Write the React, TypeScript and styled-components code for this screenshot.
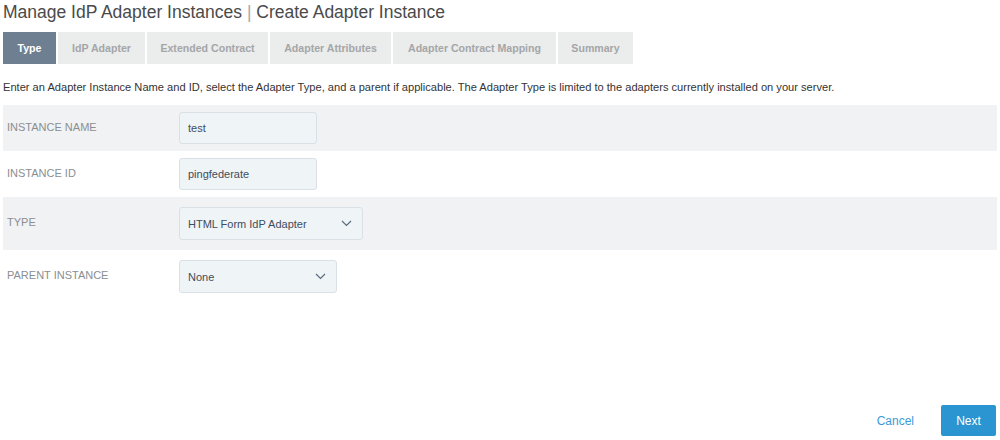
import React from 'react';
import styled, { createGlobalStyle } from 'styled-components';

const GlobalStyle = createGlobalStyle`
  html, body {
    margin: 0;
    padding: 0;
    background: #ffffff;
    font-family: "Liberation Sans", Arial, sans-serif;
  }
`;

const tabs = [
  { label: 'Type', width: 53 },
  { label: 'IdP Adapter', width: 87 },
  { label: 'Extended Contract', width: 121 },
  { label: 'Adapter Attributes', width: 121 },
  { label: 'Adapter Contract Mapping', width: 163 },
  { label: 'Summary', width: 75 },
];

const Chevron: React.FC = () => (
  <svg width="11" height="7" viewBox="0 0 11 7" fill="none">
    <path d="M1 1l4.5 4.5L10 1" stroke="#5b6b7d" strokeWidth="1.2" />
  </svg>
);

const App: React.FC = () => {
  return (
    <>
      <GlobalStyle />
      <Page>
        <Title>
          Manage IdP Adapter Instances <Divider>|</Divider> Create Adapter Instance
        </Title>
        <TabBar>
          {tabs.map((t, i) => (
            <Tab key={t.label} $active={i === 0} $width={t.width}>
              {t.label}
            </Tab>
          ))}
        </TabBar>
        <Description>
          Enter an Adapter Instance Name and ID, select the Adapter Type, and a parent if applicable. The Adapter Type is
          limited to the adapters currently installed on your server.
        </Description>
        <Form>
          <Row $shaded $height={46}>
            <Label>Instance Name</Label>
            <Input $width={138}>test</Input>
          </Row>
          <Row $height={46}>
            <Label>Instance ID</Label>
            <Input $width={138}>pingfederate</Input>
          </Row>
          <Row $shaded $height={53}>
            <Label>Type</Label>
            <Select $width={184}>
              <span>HTML Form IdP Adapter</span>
              <Chevron />
            </Select>
          </Row>
          <Row $height={53}>
            <Label>Parent Instance</Label>
            <Select $width={158}>
              <span>None</span>
              <Chevron />
            </Select>
          </Row>
        </Form>
        <Footer>
          <CancelLink>Cancel</CancelLink>
          <NextButton>Next</NextButton>
        </Footer>
      </Page>
    </>
  );
};

const Page = styled.div`
  width: 1000px;
  height: 440px;
  box-sizing: border-box;
  padding: 0 3px;
  display: flex;
  flex-direction: column;
  position: relative;
`;

const Title = styled.h1`
  margin: 0;
  padding-top: 2px;
  height: 30px;
  font-size: 17.5px;
  font-weight: 400;
  color: #4a4a4a;
  line-height: 20px;
`;

const Divider = styled.span`
  color: #a8a8a8;
  font-weight: 300;
`;

const TabBar = styled.div`
  display: flex;
  gap: 2px;
  height: 32px;
`;

const Tab = styled.div<{ $active?: boolean; $width: number }>`
  width: ${(p) => p.$width}px;
  display: flex;
  align-items: center;
  justify-content: center;
  font-size: 10.6px;
  font-weight: 700;
  background: ${(p) => (p.$active ? '#6e7f92' : '#ebecec')};
  color: ${(p) => (p.$active ? '#ffffff' : '#a4a6a8')};
`;

const Description = styled.p`
  margin: 0;
  padding-top: 17px;
  height: 24px;
  font-size: 11.1px;
  color: #333333;
  line-height: 13px;
`;

const Form = styled.div`
  display: flex;
  flex-direction: column;
  width: 994px;
`;

const Row = styled.div<{ $shaded?: boolean; $height: number }>`
  display: flex;
  align-items: center;
  height: ${(p) => p.$height}px;
  background: ${(p) => (p.$shaded ? '#f1f2f4' : '#ffffff')};
`;

const Label = styled.div`
  width: 176px;
  padding-left: 4px;
  box-sizing: border-box;
  font-size: 11px;
  text-transform: uppercase;
  color: #8a8e93;
  margin-top: -3px;
`;

const Input = styled.div<{ $width: number }>`
  width: ${(p) => p.$width}px;
  height: 32px;
  box-sizing: border-box;
  border: 1px solid #d9e1e7;
  border-radius: 3px;
  background: #eff4f7;
  padding: 0 8px;
  display: flex;
  align-items: center;
  font-size: 11px;
  color: #3f4d5c;
`;

const Select = styled(Input)`
  height: 33px;
  justify-content: space-between;
  padding-right: 10px;
`;

const Footer = styled.div`
  position: absolute;
  right: 4px;
  bottom: 4px;
  display: flex;
  align-items: center;
  gap: 27px;
`;

const CancelLink = styled.span`
  font-size: 12px;
  color: #3b9ad6;
`;

const NextButton = styled.button`
  width: 55px;
  height: 31px;
  border: none;
  border-radius: 2px;
  background: #2a95d0;
  color: #ffffff;
  font-family: inherit;
  font-size: 12px;
  font-weight: 400;
`;

export default App;
